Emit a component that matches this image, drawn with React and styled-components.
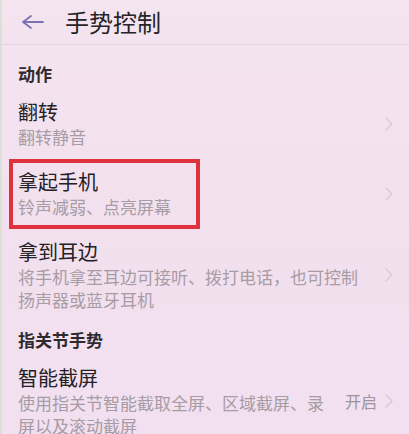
import React from 'react';
import styled, { createGlobalStyle, css } from 'styled-components';

const GlobalStyle = createGlobalStyle`
  html, body {
    margin: 0;
    padding: 0;
    background: #f3e1ef;
  }
  body {
    font-family: "Noto Sans CJK SC", "Noto Sans", sans-serif;
  }
`;

const Page = styled.div`
  width: 409px;
  height: 434px;
  overflow: hidden;
  background: linear-gradient(180deg, #f4e4f0 0%, #f3e0ee 50%, #f2dff0 100%);
  border-left: 2px solid #dde0d8;
  box-sizing: border-box;
`;

const Header = styled.header`
  height: 45px;
  display: flex;
  align-items: center;
  padding: 0 0 0 19px;
  gap: 20px;
  border-bottom: 1px solid #e5d3e0;
  box-sizing: border-box;
`;

const BackButton = styled.span`
  display: flex;
  align-items: center;
  width: 24px;
  height: 24px;
  color: #7b72b6;
`;

const Title = styled.h1`
  margin: 0;
  font-size: 24px;
  font-weight: 400;
  color: #262426;
  line-height: 30px;
`;

const List = styled.div`
  padding-top: 11px;
`;

const SectionLabel = styled.div`
  padding: 6px 16px 3px;
  font-size: 17px;
  line-height: 24px;
  font-weight: 600;
  color: #2e2a2e;
`;

const Item = styled.div`
  position: relative;
  display: flex;
  align-items: center;
  gap: 12px;
  padding: 10px 16px 11px 16px;

  ${({ $marked }) =>
    $marked &&
    css`
      &::after {
        content: '';
        position: absolute;
        left: 7px;
        top: 0;
        width: 191px;
        bottom: 0;
        border: 4px solid #e0323c;
        box-sizing: border-box;
        pointer-events: none;
      }
    `}
`;

const ItemText = styled.div`
  flex: 1;
  min-width: 0;
`;

const ItemTitle = styled.div`
  font-size: 20px;
  line-height: 26px;
  color: #242124;
`;

const ItemSub = styled.div`
  font-size: 17px;
  line-height: 23px;
  color: #a69ca4;
`;

const ItemRight = styled.div`
  display: flex;
  align-items: center;
  gap: 8px;
  flex-shrink: 0;
`;

const Value = styled.span`
  font-size: 16px;
  color: #9c949a;
`;

const Chevron = () => (
  <svg width="8" height="14" viewBox="0 0 8 14" fill="none">
    <path d="M1 1 L7 7 L1 13" stroke="#d4c8d1" strokeWidth="1.3" strokeLinecap="round" strokeLinejoin="round" />
  </svg>
);

const BackArrow = () => (
  <svg width="24" height="24" viewBox="0 0 24 24" fill="none">
    <path d="M22 12 H2 M10 6 L2 12 L10 18" stroke="currentColor" strokeWidth="1.8" strokeLinecap="round" strokeLinejoin="round" />
  </svg>
);

const sections = [
  {
    label: '动作',
    items: [
      { title: '翻转', sub: '翻转静音' },
      { title: '拿起手机', sub: '铃声减弱、点亮屏幕', marked: true },
      { title: '拿到耳边', sub: '将手机拿至耳边可接听、拨打电话，也可控制扬声器或蓝牙耳机' },
    ],
  },
  {
    label: '指关节手势',
    items: [
      { title: '智能截屏', sub: '使用指关节智能截取全屏、区域截屏、录屏以及滚动截屏', value: '开启' },
    ],
  },
];

export default function App() {
  return (
    <Page>
      <GlobalStyle />
      <Header>
        <BackButton>
          <BackArrow />
        </BackButton>
        <Title>手势控制</Title>
      </Header>
      <List>
        {sections.map((section) => (
          <section key={section.label}>
            <SectionLabel>{section.label}</SectionLabel>
            {section.items.map((item) => (
              <Item key={item.title} $marked={item.marked}>
                <ItemText>
                  <ItemTitle>{item.title}</ItemTitle>
                  <ItemSub>{item.sub}</ItemSub>
                </ItemText>
                <ItemRight>
                  {item.value && <Value>{item.value}</Value>}
                  <Chevron />
                </ItemRight>
              </Item>
            ))}
          </section>
        ))}
      </List>
    </Page>
  );
}
